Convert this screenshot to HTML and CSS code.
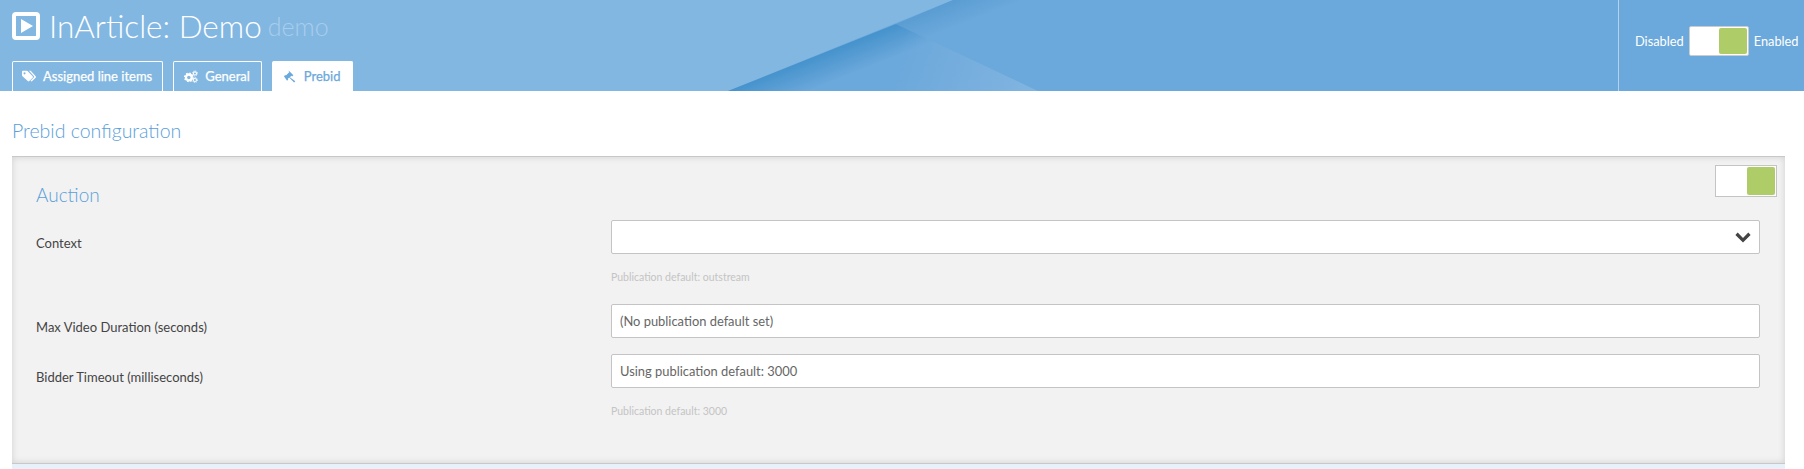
FILE: index.html
```html
<!DOCTYPE html>
<html lang="en">
<head>
<meta charset="utf-8">
<title>InArticle: Demo</title>
<link rel="stylesheet" href="styles.css">
</head>
<body>
<header class="header">
  <svg class="header-art" viewBox="0 0 1804 91" preserveAspectRatio="none" aria-hidden="true">
    <defs>
      <linearGradient id="edge" gradientUnits="userSpaceOnUse" x1="812" y1="57" x2="823" y2="85">
        <stop offset="0" stop-color="#4592cc"/>
        <stop offset="1" stop-color="#6ba8db"/>
      </linearGradient>
      <linearGradient id="edge2" gradientUnits="userSpaceOnUse" x1="925" y1="12" x2="934" y2="35">
        <stop offset="0" stop-color="#5a9dd2"/>
        <stop offset="1" stop-color="#6ba8db"/>
      </linearGradient>
      <linearGradient id="tri" gradientUnits="userSpaceOnUse" x1="900" y1="50" x2="1020" y2="91">
        <stop offset="0" stop-color="#7fb3e0" stop-opacity="0"/>
        <stop offset="1" stop-color="#7fb3e0"/>
      </linearGradient>
    </defs>
    <polygon points="953,0 1804,0 1804,91 728,91" fill="#6ba8db"/>
    <polygon points="896,24 953,0 1100,0 1100,91 1038,91" fill="url(#edge2)"/>
    <polygon points="728,91 896,24 1038,91" fill="url(#edge)"/>
    <polygon points="896,24 1038,91 860,91" fill="url(#tri)"/>
  </svg>
  <div class="header-main">
    <h1 class="title">
      <svg class="logo" viewBox="0 0 28 28" aria-hidden="true">
        <path fill-rule="evenodd" fill="#fff" d="M4 0h20a4 4 0 0 1 4 4v20a4 4 0 0 1-4 4H4a4 4 0 0 1-4-4V4a4 4 0 0 1 4-4zM4 4v20h20V4zM9 7l12 7-12 7z"/>
      </svg>
      <span>InArticle: Demo</span>
      <small class="subtitle">demo</small>
    </h1>
    <nav class="tabs">
      <a class="tab">
        <svg class="tab-icon" viewBox="0 0 16 13" aria-hidden="true">
          <path fill="currentColor" d="M0 1.2C0 .5.5 0 1.2 0h4.2c.5 0 .9.2 1.200.5l5.600 5.600c.5.500.5 1.200 0 1.700l-3.900 3.900c-.5.500-1.200.500-1.700 0L.5 6.100C.2 5.800 0 5.400 0 4.900zM2.900 1.700a1.200 1.200 0 1 0 0 2.400 1.200 1.200 0 0 0 0-2.400z"/>
          <path fill="currentColor" d="M8 0h1.300c.5 0 .9.2 1.200.5l5.100 5.600c.5.500.5 1.200 0 1.700l-3.900 3.900c-.5.500-1.200.500-1.700 0l-.3-.3 3.700-3.700c.5-.5.5-1.200 0-1.700z"/>
        </svg>
        Assigned line items
      </a>
      <a class="tab tab-wide">
        <svg class="tab-icon" viewBox="0 0 16 14" aria-hidden="true">
          <circle cx="5.500" cy="8" r="3.300" fill="none" stroke="currentColor" stroke-width="2.600"/>
          <circle cx="5.500" cy="8" r="4.700" fill="none" stroke="currentColor" stroke-width="1.800" stroke-dasharray="1.800 1.900"/>
          <circle cx="12.500" cy="3.500" r="1.800" fill="none" stroke="currentColor" stroke-width="1.200"/>
          <circle cx="12.500" cy="3.500" r="2.900" fill="none" stroke="currentColor" stroke-width="1" stroke-dasharray="1.100 1.200"/>
          <circle cx="12.500" cy="11" r="1.800" fill="none" stroke="currentColor" stroke-width="1.200"/>
          <circle cx="12.500" cy="11" r="2.900" fill="none" stroke="currentColor" stroke-width="1" stroke-dasharray="1.100 1.200"/>
        </svg>
        General
      </a>
      <a class="tab tab-wide tab-active">
        <svg class="tab-icon" viewBox="0 0 14 14" aria-hidden="true">
          <path fill="currentColor" d="M5.600.6l5 5-1.400 1.400-.7-.7-1.600 1.600 5.800 4.300-1.300 1.300L6.100 8 4.500 9.600l.7.700-1.400 1.400-3.300-5 1.400-1.400.7.700 3.800-3.800-.7-.7z"/>
        </svg>
        Prebid
      </a>
    </nav>
  </div>
  <div class="status">
    <span>Disabled</span>
    <span class="switch switch-light"><span class="knob"></span></span>
    <span>Enabled</span>
  </div>
</header>
<main class="content">
  <h2 class="page-heading">Prebid configuration</h2>
  <section class="panel">
    <div class="panel-switch"><span class="switch"><span class="knob"></span></span></div>
    <h3 class="panel-heading">Auction</h3>
    <div class="field field-hinted">
      <label class="field-label">Context</label>
      <div class="field-body">
        <div class="select">
          <svg class="chevron" viewBox="0 0 16 11" aria-hidden="true">
            <path fill="#444" d="M8 10.500.4 2.900 2.700.6 8 5.900 13.300.6l2.300 2.300z"/>
          </svg>
        </div>
        <p class="hint">Publication default: outstream</p>
      </div>
    </div>
    <div class="field">
      <label class="field-label">Max Video Duration (seconds)</label>
      <div class="field-body"><div class="input">(No publication default set)</div></div>
    </div>
    <div class="field">
      <label class="field-label">Bidder Timeout (milliseconds)</label>
      <div class="field-body">
        <div class="input">Using publication default: 3000</div>
        <p class="hint">Publication default: 3000</p>
      </div>
    </div>
  </section>
  <div class="strip"></div>
</main>
</body>
</html>
```

FILE: styles.css
```css
* { box-sizing: border-box; }

html, body {
  margin: 0;
  padding: 0;
  height: 469px;
  overflow: hidden;
  background: #fff;
  font-family: Lato, "Open Sans", sans-serif;
  color: #444;
}

.header {
  position: relative;
  height: 91px;
  display: flex;
  justify-content: space-between;
  background: #82b7e2;
  overflow: hidden;
}

.header-art {
  position: absolute;
  left: 0;
  top: 0;
  width: 100%;
  height: 100%;
}

.header-main {
  position: relative;
  padding: 12px 0 0 12px;
  display: flex;
  flex-direction: column;
  justify-content: space-between;
}

.title {
  margin: 0;
  display: flex;
  align-items: center;
  height: 28px;
  font-size: 31.500px;
  font-weight: 300;
  color: #fff;
  white-space: nowrap;
}

.logo {
  width: 28px;
  height: 28px;
  margin-right: 9px;
}

.subtitle {
  margin-left: 6px;
  font-size: 25px;
  font-weight: 300;
  color: #a9cdea;
}

.tabs {
  display: flex;
  gap: 10px;
}

.tab {
  display: flex;
  align-items: center;
  height: 30px;
  padding: 0 10px 0 9px;
  border: 1px solid #fff;
  border-bottom: 0;
  border-radius: 2px 2px 0 0;
  color: #fff;
  font-size: 13px;
  -webkit-text-stroke: 0.25px currentColor;
  line-height: 1;
  white-space: nowrap;
}

.tab-wide {
  padding: 0 11px 0 10px;
}

.tab-active {
  background: #fff;
  color: #6ba8db;
}

.tab-icon {
  width: 14px;
  height: 13px;
  margin-right: 7px;
  flex: none;
}

.status {
  position: relative;
  width: 186px;
  border-left: 1px solid #b5d2ec;
  display: flex;
  align-items: center;
  padding: 0 0 9px 16px;
  gap: 5px;
  color: #fff;
  font-size: 12.800px;
  white-space: nowrap;
}

.switch {
  display: flex;
  justify-content: flex-end;
  flex: none;
  width: 62px;
  height: 32px;
  padding: 1px;
  background: #fff;
  border: 1px solid #c4c4c4;
}

.switch-light {
  width: 60px;
  height: 30px;
  border-color: #c9ccd0;
  border-radius: 2px;
}

.knob {
  width: 28px;
  height: 100%;
  background: #aecd69;
  border-radius: 2px;
}

.content {
  padding: 0 19px 0 12px;
}

.page-heading {
  margin: 0;
  padding-top: 25px;
  height: 65px;
  font-size: 19.500px;
  line-height: 30px;
  font-weight: 300;
  color: #5aa0da;
}

.panel {
  position: relative;
  height: 308px;
  padding: 23px 25px 0 24px;
  background: #f2f2f2;
  border-top: 1px solid #c8c8c8;
  border-bottom: 1px solid #c8c8c8;
  box-shadow: inset 0 0 7px rgba(0, 0, 0, 0.14);
}

.panel-switch {
  position: absolute;
  top: 8px;
  right: 8px;
}

.panel-heading {
  margin: 0;
  height: 40px;
  font-size: 19px;
  line-height: 30px;
  font-weight: 300;
  color: #5aa0da;
}

.field {
  display: flex;
  margin-bottom: 16px;
}

.field-hinted {
  margin-bottom: 20px;
}

.field-label {
  width: 575px;
  flex: none;
  padding-top: 15px;
  font-size: 13px;
  line-height: 17px;
  color: #444;
}

.field-body {
  flex: 1;
}

.select,
.input {
  display: flex;
  align-items: center;
  justify-content: flex-end;
  height: 34px;
  padding: 0 8px;
  background: #fff;
  border: 1px solid #c4c4c4;
  border-radius: 2px;
  font-size: 12.900px;
  color: #666;
}

.input {
  justify-content: flex-start;
}

.chevron {
  width: 16px;
  height: 11px;
}

.hint {
  margin: 16px 0 0;
  font-size: 10.500px;
  line-height: 14px;
  color: #c4c4c4;
}

.strip {
  height: 5px;
  background: #e6f1fa;
}
```
